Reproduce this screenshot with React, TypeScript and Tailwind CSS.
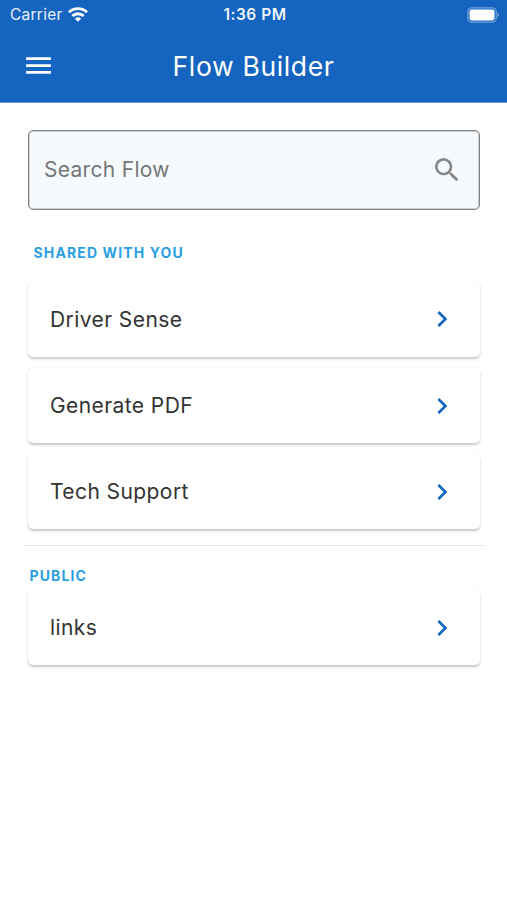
import { MdChevronRight, MdMenu, MdSearch } from "react-icons/md";

const sharedFlows = ["Driver Sense", "Generate PDF", "Tech Support"];
const publicFlows = ["links"];

export default function App() {
  return (
    <main className="min-h-screen w-full bg-white font-['Inter',sans-serif] text-[#333333]">
      <header className="h-[103px] border-b border-[#5b93d3] bg-[#1565c0] text-white">
        <StatusBar />

        <div className="grid h-[71px] grid-cols-[1fr_auto_1fr] items-center px-[22px]">
          <button type="button" aria-label="Open menu" className="w-[33px]">
            <MdMenu size={33} />
          </button>

          <h1 className="text-[26.5px] leading-8 tracking-[0.65px]">
            Flow Builder
          </h1>
        </div>
      </header>

      <div className="px-7 pt-[27px]">
        <label className="flex h-20 w-[452px] items-center rounded-[5px] border border-[#808285] bg-[#f6fafd] pr-4 pl-[15px] shadow-[inset_0_0_0_1px_rgba(128,130,133,0.35)]">
          <input
            type="text"
            placeholder="Search Flow"
            aria-label="Search Flow"
            className="min-w-0 flex-1 bg-transparent text-[21px] tracking-[0.3px] outline-none placeholder:text-[#747678]"
          />
          <MdSearch size={32} className="text-[#858585]" />
        </label>

        <h2 className="mt-[33px] ml-[5.5px] text-sm leading-5 font-bold tracking-[1.13px] text-[#2b9fe0]">
          SHARED WITH YOU
        </h2>
        <FlowList flows={sharedFlows} className="mt-[18.8px]" />

        <hr className="mt-[15.2px] -ml-1 w-[461px] border-[#e6e6e6]" />

        <h2 className="mt-5 ml-[1.5px] text-sm leading-5 font-bold tracking-[1.13px] text-[#2b9fe0]">
          PUBLIC
        </h2>
        <FlowList flows={publicFlows} className="mt-[4.8px]" />
      </div>
    </main>
  );
}

function FlowList({ flows, className }: { flows: string[]; className: string }) {
  return (
    <ul className={`flex w-[452px] flex-col gap-[11.3px] ${className}`}>
      {flows.map((flow) => (
        <li key={flow}>
          <button
            type="button"
            className="flex h-[75px] w-full items-center justify-between rounded-[5px] bg-white pr-[22px] pl-[22px] text-[21px] tracking-[0.42px] shadow-[0_1.5px_2.5px_rgba(0,0,0,0.22)]"
          >
            {flow}
            <MdChevronRight size={32} className="text-[#1565c0]" />
          </button>
        </li>
      ))}
    </ul>
  );
}

function StatusBar() {
  return (
    <div className="grid h-[30px] grid-cols-[1fr_auto_1fr] items-center pr-[7px] pl-[10px]">
      <div className="flex items-center gap-[5px]">
        <span className="text-[15.5px] tracking-[0.25px] text-white/90">
          Carrier
        </span>
        <WifiIcon />
      </div>

      <span className="text-[15.5px] font-semibold tracking-[0.5px] text-white/95">
        1:36 PM
      </span>

      <BatteryIcon />
    </div>
  );
}

function WifiIcon() {
  return (
    <svg
      className="mb-px h-[15px] w-5"
      viewBox="0 0 20 15"
      fill="none"
      stroke="currentColor"
      strokeWidth="2.9"
    >
      <path d="M1 5.2a13 13 0 0 1 18 0" />
      <path d="M4.4 9a8 8 0 0 1 11.2 0" />
      <path d="M10 14.8 6.9 11.8a4.5 4.5 0 0 1 6.2 0Z" fill="currentColor" stroke="none" />
    </svg>
  );
}

function BatteryIcon() {
  return (
    <svg className="mb-px h-4 w-[33px] justify-self-end" viewBox="0 0 33 16" fill="none">
      <rect x="0.8" y="0.8" width="28.4" height="14.4" rx="4.2" stroke="white" strokeOpacity="0.4" strokeWidth="1.3" />
      <rect x="2.5" y="2.6" width="25" height="10.8" rx="2.4" fill="white" />
      <path d="M30.6 5.8c1.8.7 1.8 3.7 0 4.4Z" fill="white" fillOpacity="0.5" />
    </svg>
  );
}
